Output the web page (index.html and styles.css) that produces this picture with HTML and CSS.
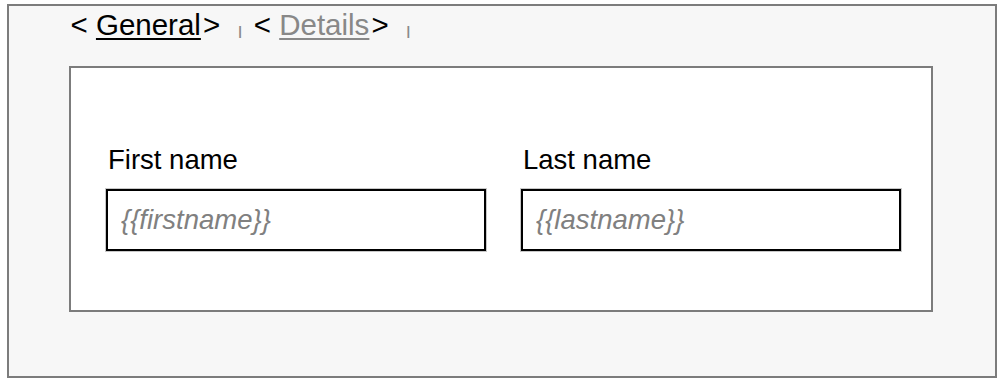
FILE: index.html
```html
<!DOCTYPE html>
<html lang="en">
<head>
<meta charset="utf-8">
<title>Form</title>
<link rel="stylesheet" href="styles.css">
</head>
<body>
<div class="frame">
  <nav class="tabs">
    <span class="tab"><span class="br">&lt;</span> <a class="tab-link active" href="#">General</a><span class="br br-close">&gt;</span></span><span class="sep">|</span><span class="tab"><span class="br">&lt;</span> <a class="tab-link" href="#">Details</a><span class="br br-close">&gt;</span></span><span class="sep">|</span>
  </nav>
  <section class="panel">
    <div class="fields">
      <div class="field">
        <label class="label" for="fn">First name</label>
        <input class="input" id="fn" type="text" placeholder="{{firstname}}">
      </div>
      <div class="field">
        <label class="label" for="ln">Last name</label>
        <input class="input" id="ln" type="text" placeholder="{{lastname}}">
      </div>
    </div>
  </section>
</div>
</body>
</html>
```
FILE: styles.css
```css
html, body {
  margin: 0;
  background: #ffffff;
}
body {
  font-family: "Liberation Sans", Arial, sans-serif;
}
.frame {
  margin: 4px 0 0 7px;
  width: 986px;
  height: 370px;
  border: 2px solid #7c7c7c;
  background: #f7f7f7;
}
.tabs {
  padding: 2px 0 0 61.5px;
  font-size: 29.5px;
  line-height: 34px;
  height: 34px;
  white-space: nowrap;
  color: #000;
}
.tab-link {
  color: #000;
  text-decoration: underline;
  text-underline-offset: 3px;
}
.tab-link:not(.active) {
  color: #888888;
}
.br-close {
  margin-left: 2px;
}
.sep {
  display: inline-block;
  font-size: 13px;
  font-weight: bold;
  line-height: 1;
  color: #8a8a8a;
  margin: 0 12px 0 18px;
}
.panel {
  margin: 24px 0 0 60px;
  border: 2px solid #7c7c7c;
  background: #ffffff;
  padding: 77px 0 59px 35px;
  box-sizing: content-box;
  width: 825px;
}
.fields {
  display: flex;
  gap: 35px;
}
.field {
  width: 380px;
}
.label {
  display: block;
  font-size: 27.5px;
  line-height: 30px;
  padding-left: 2px;
  margin-bottom: 14px;
  color: #000;
}
.input {
  display: block;
  box-sizing: border-box;
  width: 380px;
  height: 62px;
  margin: 0;
  border: 2px solid #000;
  border-radius: 0;
  padding: 0 0 0 13px;
  background: #fff;
  box-shadow: 0 0 0 1px #c8c8c8;
  font-family: "Liberation Sans", Arial, sans-serif;
  font-style: italic;
  font-size: 27.5px;
  color: #000;
  outline: none;
}
.input::placeholder {
  color: #808080;
  opacity: 1;
}
```
